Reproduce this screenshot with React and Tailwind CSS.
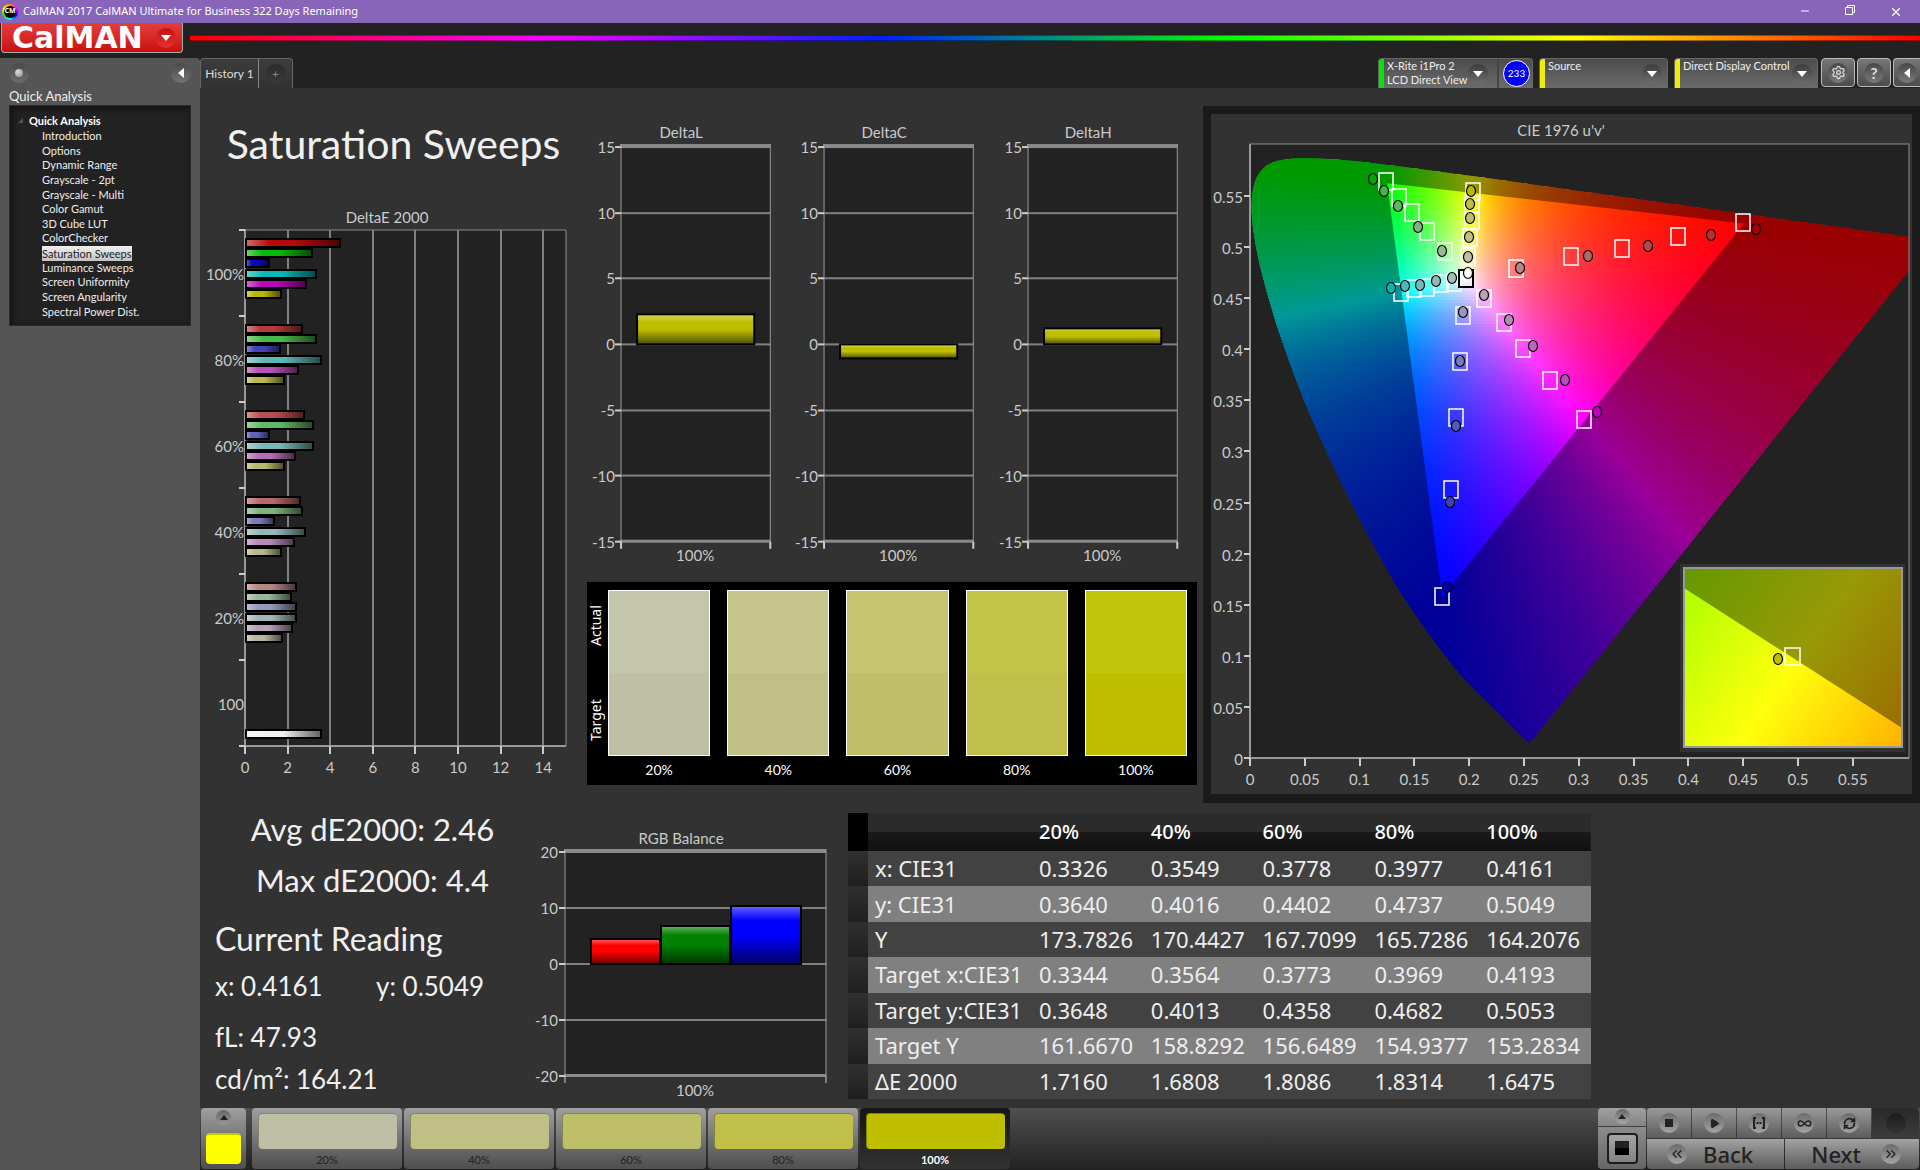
import { Minus, Copy, X, Settings, Infinity as Loop, RefreshCw, ChevronsLeft, ChevronsRight, Play } from 'lucide-react';

const WORKFLOW = [
  'Introduction',
  'Options',
  'Dynamic Range',
  'Grayscale - 2pt',
  'Grayscale - Multi',
  'Color Gamut',
  '3D Cube LUT',
  'ColorChecker',
  'Saturation Sweeps',
  'Luminance Sweeps',
  'Screen Uniformity',
  'Screen Angularity',
  'Spectral Power Dist.',
];

const DELTA_E = [
  { label: '100%', values: [4.4, 3.1, 1.1, 3.3, 2.8, 1.65], colors: ['#b80a0a', '#0ab80a', '#0a0ab8', '#0ab8b8', '#b80ab8', '#b8b80a'] },
  { label: '80%', values: [2.65, 3.3, 1.58, 3.5, 2.45, 1.8], colors: ['#b93a3a', '#48b848', '#4444b8', '#5cb8b8', '#b850b8', '#b8b850'] },
  { label: '60%', values: [2.7, 3.16, 1.06, 3.16, 2.32, 1.8], colors: ['#b94f4f', '#64b864', '#6060b8', '#78b8b8', '#b86cb8', '#b8b86e'] },
  { label: '40%', values: [2.55, 2.65, 1.33, 2.78, 2.24, 1.66], colors: ['#b86868', '#7cb47c', '#7b7bb8', '#92b8b8', '#b888b8', '#b8b888'] },
  { label: '20%', values: [2.36, 2.13, 2.36, 2.36, 2.18, 1.71], colors: ['#b88585', '#98b898', '#9898b8', '#a2b8b8', '#b8a0b8', '#b8b8a0'] },
];

const SWATCHES = [
  { label: '20%', actual: '#c3c6aa', target: '#bfbfa5' },
  { label: '40%', actual: '#c5c58c', target: '#c0bf86' },
  { label: '60%', actual: '#c5c56e', target: '#bfbf6a' },
  { label: '80%', actual: '#c3c549', target: '#bfbf4a' },
  { label: '100%', actual: '#c3c40e', target: '#bfbf00' },
];

const READINGS = [
  ['x: CIE31', '0.3326', '0.3549', '0.3778', '0.3977', '0.4161'],
  ['y: CIE31', '0.3640', '0.4016', '0.4402', '0.4737', '0.5049'],
  ['Y', '173.7826', '170.4427', '167.7099', '165.7286', '164.2076'],
  ['Target x:CIE31', '0.3344', '0.3564', '0.3773', '0.3969', '0.4193'],
  ['Target y:CIE31', '0.3648', '0.4013', '0.4358', '0.4682', '0.5053'],
  ['Target Y', '161.6670', '158.8292', '156.6489', '154.9377', '153.2834'],
  ['ΔE 2000', '1.7160', '1.6808', '1.8086', '1.8314', '1.6475'],
];

// CIE 1931 xy of the spectral locus
const LOCUS_XY = [
  [0.1741, 0.005], [0.1714, 0.0051], [0.1644, 0.0109], [0.1566, 0.0177], [0.144, 0.0297], [0.1241, 0.0578],
  [0.1096, 0.0868], [0.0913, 0.1327], [0.0687, 0.2007], [0.0454, 0.295], [0.0235, 0.4127], [0.0082, 0.5384],
  [0.0039, 0.6548], [0.0139, 0.7502], [0.0389, 0.812], [0.0743, 0.8338], [0.1142, 0.8262], [0.1547, 0.8059],
  [0.2296, 0.7543], [0.3016, 0.6923], [0.3731, 0.6245], [0.4441, 0.5547], [0.5125, 0.4866], [0.5752, 0.4242],
  [0.627, 0.3725], [0.6658, 0.334], [0.6915, 0.3083], [0.719, 0.2809], [0.7347, 0.2653],
];

const PLOT_W = 659;
const PLOT_H = 614;
const U_SCALE = 1096;
const V_SCALE = 1022;

const toPlot = (u, v) => [u * U_SCALE, PLOT_H - v * V_SCALE];

const locus = LOCUS_XY.map(([x, y]) => {
  const d = -2 * x + 12 * y + 3;
  return toPlot((4 * x) / d, (9 * y) / d);
});

const gamut = [toPlot(0.4507, 0.5229), toPlot(0.125, 0.5625), toPlot(0.1754, 0.1579)];

// Catmull-Rom through the locus samples, closed by the purple line
function smoothPath(pts) {
  let d = `M${pts[0][0]} ${pts[0][1]}`;
  for (let i = 0; i < pts.length - 1; i++) {
    const p0 = pts[i - 1] || pts[i];
    const p1 = pts[i];
    const p2 = pts[i + 1];
    const p3 = pts[i + 2] || p2;
    d += `C${p1[0] + (p2[0] - p0[0]) / 6} ${p1[1] + (p2[1] - p0[1]) / 6} ${p2[0] - (p3[0] - p1[0]) / 6} ${p2[1] - (p3[1] - p1[1]) / 6} ${p2[0]} ${p2[1]}`;
  }
  return d + 'Z';
}

// linear RGB, scaled so that the strongest channel is full
function chromaColor(px, py) {
  const u = px / U_SCALE;
  const v = Math.max((PLOT_H - py) / V_SCALE, 0.002);
  const d = 6 * u - 16 * v + 12;
  const x = (9 * u) / d;
  const y = (4 * v) / d;
  const X = x / y;
  const Z = (1 - x - y) / y;
  const rgb = [
    3.2406 * X - 1.5372 - 0.4986 * Z,
    -0.9689 * X + 1.8758 + 0.0415 * Z,
    0.0557 * X - 0.204 + 1.057 * Z,
  ].map((c) => Math.max(c, 0));
  const max = Math.max(...rgb);
  return `rgb(${rgb.map((c) => Math.round((255 * c) / max)).join(',')})`;
}

const ROW = 3;
const colorRows = [];
for (let y = 0; y < PLOT_H; y += ROW) {
  const xs = [];
  locus.forEach((a, i) => {
    const b = locus[(i + 1) % locus.length];
    for (const yy of [y - 4, y + 1, y + 7]) {
      if (a[1] > yy !== b[1] > yy) {
        xs.push(a[0] + ((yy - a[1]) / (b[1] - a[1])) * (b[0] - a[0]));
      }
    }
  });
  if (!xs.length) continue;
  const x1 = Math.max(Math.min(...xs) - 30, 0);
  const x2 = Math.min(Math.max(...xs) + 30, PLOT_W);
  const n = Math.ceil((x2 - x1) / 8);
  const stops = [];
  for (let i = 0; i <= n; i++) {
    stops.push(chromaColor(x1 + ((x2 - x1) * i) / n, y + ROW / 2));
  }
  colorRows.push({ y, x1, x2, stops });
}

const TARGETS = [
  [493, 78], [428, 92], [372, 104], [321, 112], [266, 124],
  [136, 37], [149, 53], [162, 68], [177, 87], [195, 107],
  [223, 47], [222, 60], [222, 76], [220, 93], [218, 112],
  [151, 148], [164, 144], [177, 143], [191, 139], [204, 138],
  [234, 154], [254, 178], [273, 204], [300, 236], [334, 275],
  [213, 171], [210, 217], [206, 273], [201, 345], [192, 452],
];

const ACTUALS = [
  [506, 85, '#a80000'], [461, 91, '#b83030'], [398, 102, '#b84848'], [338, 112, '#b86464'], [270, 124, '#b88585'],
  [123, 35, '#00a800'], [134, 47, '#40b840'], [148, 62, '#60b860'], [168, 83, '#7cb47c'], [192, 107, '#98b898'],
  [221, 47, '#b8b800'], [220, 60, '#bfbf48'], [220, 74, '#bfbf6a'], [219, 93, '#bfbf86'], [218, 113, '#bfbfa5'],
  [141, 144, '#00b8b8'], [155, 142, '#50b8b8'], [170, 141, '#78b8b8'], [186, 137, '#92b8b8'], [202, 134, '#a6bcbc'],
  [234, 151, '#b8a0b8'], [259, 176, '#b888b8'], [283, 202, '#b86cb8'], [315, 236, '#b850b8'], [347, 268, '#c000c0'],
  [213, 168, '#9898c0'], [210, 217, '#7b7bb8'], [206, 282, '#5858b8'], [200, 358, '#4040b8'], [197, 443, '#0000b0'],
  [218, 129, '#ffffff'],
];

const chartText = "fill-[#cacaca] font-['Lato',sans-serif] text-[15px]";

function GlossDefs({ id, vertical }) {
  return (
    <linearGradient id={id} x1="0" y1="0" x2={vertical ? '0' : '1'} y2={vertical ? '1' : '0'}>
      <stop offset="0" stopColor="#fff" stopOpacity="0.4" />
      <stop offset="0.25" stopColor="#fff" stopOpacity="0" />
      <stop offset="0.5" stopColor="#000" stopOpacity="0" />
      <stop offset="1" stopColor="#000" stopOpacity="0.6" />
    </linearGradient>
  );
}

function GlossBar({ x, y, w, h, fill, gloss }) {
  return (
    <g>
      <rect x={x} y={y} width={w} height={h} fill={fill} />
      <rect x={x} y={y} width={w} height={h} fill={`url(#${gloss})`} stroke="#000" strokeWidth="2" />
    </g>
  );
}

function DeltaEChart() {
  const x0 = 45;
  const top = 30;
  const group = 86;
  const unit = 21.3;
  return (
    <svg viewBox="0 0 387 603" className="block w-full" role="img" aria-label="DeltaE 2000 by saturation level">
      <defs>
        <GlossDefs id="gloss-h" />
      </defs>
      <text x="187" y="23" textAnchor="middle" className={chartText}>DeltaE 2000</text>
      <rect x={x0} y={top} width="321" height="516" fill="#222" />
      {[2, 4, 6, 8, 10, 12, 14].map((v) => (
        <rect key={v} x={Math.round(x0 + v * unit) - 1} y={top} width="2" height="516" fill="#808080" />
      ))}
      <path d="M45 30H366V546" fill="none" stroke="#8c8c8c" strokeWidth="1" />
      <path d="M45 29V546H366" fill="none" stroke="#999" strokeWidth="2" />
      {[0, 1, 2, 3, 4, 5, 6].map((i) => (
        <rect key={i} x="39" y={top + i * group - 1} width="6" height="2" fill="#ccc" />
      ))}
      {[0, 2, 4, 6, 8, 10, 12, 14].map((v) => (
        <g key={v}>
          <rect x={Math.round(x0 + v * unit) - 1} y="546" width="2" height="8" fill="#ccc" />
          <text x={x0 + v * unit} y="573" textAnchor="middle" className={chartText}>{v}</text>
        </g>
      ))}
      {DELTA_E.map((g, i) => (
        <g key={g.label}>
          <text x="44" y={top + i * group + 50} textAnchor="end" className={chartText}>{g.label}</text>
          {g.values.map((v, j) => (
            <GlossBar
              key={j}
              x={x0 + 1}
              y={Math.round(39 + i * group + j * 10.2)}
              w={Math.round(v * unit)}
              h={8}
              fill={g.colors[j]}
              gloss="gloss-h"
            />
          ))}
        </g>
      ))}
      <text x="44" y="510" textAnchor="end" className={chartText}>100</text>
      <GlossBar x={x0 + 1} y={530} w={75} h={8} fill="#f0f0f0" gloss="gloss-h" />
    </svg>
  );
}

function DeltaChart({ title, id, value }) {
  const unit = 13.13;
  const zero = 234;
  return (
    <svg viewBox="0 0 203 471" className="block min-w-0 flex-1" role="img" aria-label={title}>
      <defs>
        <GlossDefs id={id} vertical />
      </defs>
      <text x="94" y="28" textAnchor="middle" className={chartText}>{title}</text>
      <rect x="34" y="34" width="149" height="397" fill="#222" />
      {[10, 5, 0, -5, -10].map((v) => (
        <rect key={v} x="34" y={Math.round(zero - v * unit) - 1} width="149" height="2" fill="#808080" />
      ))}
      <rect x="33" y="34" width="150" height="4" fill="#8a8a8a" />
      <rect x="33" y="429" width="150" height="3" fill="#8a8a8a" />
      <path d="M34 34V431M183 34V431" stroke="#999" strokeWidth="1" />
      <path d="M34 431V438M183 431V438" stroke="#ccc" strokeWidth="2" />
      {[15, 10, 5, 0, -5, -10, -15].map((v) => (
        <g key={v}>
          <rect x="28" y={Math.round(zero - v * unit) - 1} width="6" height="2" fill="#ccc" />
          <text x="28" y={Math.round(zero - v * unit) + 6} textAnchor="end" className={chartText}>{v}</text>
        </g>
      ))}
      <GlossBar
        x={50}
        y={value > 0 ? Math.round(zero - value * unit) : zero}
        w={117}
        h={Math.round(Math.abs(value) * unit)}
        fill="#bfbf00"
        gloss={id}
      />
      <text x="108" y="450" textAnchor="middle" className={chartText}>100%</text>
    </svg>
  );
}

function RgbBalanceChart() {
  return (
    <svg viewBox="0 0 318 305" className="block w-full" role="img" aria-label="RGB Balance">
      <defs>
        <GlossDefs id="gloss-rgb" vertical />
      </defs>
      <text x="151" y="41" textAnchor="middle" className={chartText}>RGB Balance</text>
      <rect x="35" y="46" width="261" height="228" fill="#222" />
      {[105, 161, 217].map((y) => (
        <rect key={y} x="35" y={y - 1} width="261" height="2" fill="#808080" />
      ))}
      <rect x="34" y="46" width="262" height="4" fill="#8a8a8a" />
      <rect x="34" y="271" width="262" height="3" fill="#8a8a8a" />
      <path d="M35 46V273M296 46V273" stroke="#999" strokeWidth="1" />
      <path d="M35 273V280M296 273V280" stroke="#ccc" strokeWidth="1" />
      {[20, 10, 0, -10, -20].map((v, i) => (
        <g key={v}>
          <rect x="29" y={48 + i * 56} width="6" height="2" fill="#ccc" />
          <text x="28" y={55 + i * 56} textAnchor="end" className={chartText}>{v}</text>
        </g>
      ))}
      <GlossBar x={61} y={136} w={69} h={25} fill="#ff0000" gloss="gloss-rgb" />
      <GlossBar x={131} y={123} w={69} h={38} fill="#008000" gloss="gloss-rgb" />
      <GlossBar x={201} y={103} w={70} h={58} fill="#0000ff" gloss="gloss-rgb" />
      <text x="165" y="293" textAnchor="middle" className={chartText}>100%</text>
    </svg>
  );
}

function CieChart() {
  const locusPath = smoothPath(locus);
  const gamutPath = `M${gamut.map((p) => p.join(' ')).join('L')}Z`;
  return (
    <svg viewBox="0 0 701 680" className="block w-full bg-[#323232]" role="img" aria-label="CIE 1976 chromaticity diagram">
      <defs>
        <clipPath id="plot-clip">
          <rect width={PLOT_W} height={PLOT_H} />
        </clipPath>
        <clipPath id="locus-clip">
          <path d={locusPath} />
        </clipPath>
        {colorRows.map((r) => (
          <linearGradient key={r.y} id={`row-${r.y}`} gradientUnits="userSpaceOnUse" x1={r.x1} x2={r.x2} y1="0" y2="0">
            {r.stops.map((c, i) => (
              <stop key={i} offset={i / (r.stops.length - 1)} stopColor={c} />
            ))}
          </linearGradient>
        ))}
        <linearGradient id="inset-bright" gradientUnits="userSpaceOnUse" x1="-3" y1="6" x2="235" y2="172">
          <stop offset="0" stopColor="#a7ff00" />
          <stop offset="0.5" stopColor="#ffff0c" />
          <stop offset="1" stopColor="#ffac00" />
        </linearGradient>
      </defs>
      <text x="350" y="22" textAnchor="middle" className={chartText}>CIE 1976 u'v'</text>
      <g transform="translate(39 30)">
        <rect width={PLOT_W} height={PLOT_H} fill="#222" />
        <g clipPath="url(#plot-clip)">
          <g clipPath="url(#locus-clip)">
            {colorRows.map((r) => (
              <rect key={r.y} x={r.x1} y={r.y} width={r.x2 - r.x1} height={ROW + 1} fill={`url(#row-${r.y})`} />
            ))}
            <path d={`M0 0H${PLOT_W}V${PLOT_H}H0Z${gamutPath}`} fill="#000" fillOpacity="0.4" fillRule="evenodd" />
          </g>
        </g>
        <rect width={PLOT_W} height={PLOT_H} fill="none" stroke="#8c8c8c" strokeWidth="1" />
        <path d={`M0 0V${PLOT_H}H${PLOT_W}`} fill="none" stroke="#999" strokeWidth="2" />
        {[0, 0.05, 0.1, 0.15, 0.2, 0.25, 0.3, 0.35, 0.4, 0.45, 0.5, 0.55].map((v) => (
          <g key={v}>
            <rect x={Math.round(v * U_SCALE) - 1} y={PLOT_H} width="2" height="8" fill="#ccc" />
            <rect x="-6" y={Math.round(PLOT_H - v * V_SCALE) - 1} width="6" height="2" fill="#ccc" />
            <text x={v * U_SCALE} y="641" textAnchor="middle" className={chartText}>{v}</text>
            <text x="-7" y={PLOT_H - v * V_SCALE + 7} textAnchor="end" className={chartText}>{v}</text>
          </g>
        ))}
        {TARGETS.map(([x, y], i) => (
          <rect key={i} x={x - 7} y={y - 8} width="14" height="17" fill="none" stroke="#fff" strokeWidth="1.500" />
        ))}
        <rect x="209" y="126" width="14" height="17" fill="none" stroke="#000" strokeWidth="2" />
        {ACTUALS.map(([x, y, fill], i) => (
          <ellipse key={i} cx={x} cy={y} rx="4.500" ry="5.500" fill={fill} stroke="#000" strokeWidth="1.200" />
        ))}
      </g>
      {/* close-up of the selected saturation */}
      <g transform="translate(473 454)">
        <rect x="-4" y="-4" width="225" height="188" fill="#323232" />
        <rect width="218" height="179" fill="url(#inset-bright)" />
        <path d="M0 0H218V160L0 20Z" fill="#000" fillOpacity="0.4" />
        <rect width="218" height="179" fill="none" stroke="#999" strokeWidth="2" />
        <rect x="101" y="80" width="15" height="17" fill="none" stroke="#fff" strokeWidth="1.500" />
        <ellipse cx="94" cy="91" rx="4.500" ry="5.500" fill="#bfbf00" stroke="#000" strokeWidth="1.200" />
      </g>
    </svg>
  );
}

function SwatchPanel() {
  return (
    <div className="flex h-[203px] bg-black pt-2 pr-[10px] font-['Lato',sans-serif] text-[14px] leading-4 text-white">
      <div className="flex h-[166px] w-[21px] rotate-180 items-center justify-between pt-[15px] pb-[15px] pl-[3px] font-['Noto_Sans',sans-serif] [writing-mode:vertical-rl]">
        <span>Target</span>
        <span>Actual</span>
      </div>
      <div className="flex flex-1 gap-[17px]">
        {SWATCHES.map((s) => (
          <div key={s.label} className="flex flex-1 flex-col items-center">
            <div className="flex h-[166px] w-full flex-col border border-white">
              <div className="flex-1" style={{ backgroundColor: s.actual }} />
              <div className="flex-1" style={{ backgroundColor: s.target }} />
            </div>
            <span className="mt-[6px]">{s.label}</span>
          </div>
        ))}
      </div>
    </div>
  );
}

function ReadingsTable() {
  return (
    <table className="mt-[10px] mb-[9px] w-full table-fixed border-collapse text-left font-['Noto_Sans',sans-serif] text-[22px] leading-[35px] text-[#eee]">
      <colgroup>
        <col className="w-[20px]" />
        <col className="w-[164px]" />
        <col /><col /><col /><col /><col />
      </colgroup>
      <thead>
        <tr className="h-[38px] bg-linear-to-b from-[#2b2b2b] from-50% via-[#1a1a1a] via-50% to-[#101010] text-[20px] leading-[38px]">
          <th scope="col" className="bg-black" />
          <th scope="col" />
          {SWATCHES.map((s) => (
            <th key={s.label} scope="col" className="p-0 pl-[7px] font-medium text-white">{s.label}</th>
          ))}
        </tr>
      </thead>
      <tbody>
        {READINGS.map(([name, ...cells], i) => (
          <tr key={name} className={i % 2 ? 'bg-[#808080]' : 'bg-[#424242]'}>
            <td className="bg-linear-to-b from-[#303030] to-[#1f1f1f] p-0" />
            <th scope="row" className="p-0 pl-[7px] font-normal whitespace-nowrap">{name}</th>
            {cells.map((c, j) => (
              <td key={j} className="p-0 pl-[7px]">{c}</td>
            ))}
          </tr>
        ))}
      </tbody>
    </table>
  );
}

function Caret() {
  return (
    <span className="flex size-5 shrink-0 items-center justify-center rounded-full bg-linear-to-b from-[#3c3c3c] to-[#6e6e6e]">
      <svg viewBox="0 0 10 6" className="h-[6px] w-[10px] fill-white"><path d="M0 0H10L5 6Z" /></svg>
    </span>
  );
}

function DeviceButton({ lines, stripe, children, className }) {
  return (
    <button type="button" className={`flex h-[30px] overflow-hidden rounded-t border border-b-0 border-[#666] bg-linear-to-b from-[#4c4c4c] to-[#6b6b6b] text-left ${className}`}>
      <span className={`h-full w-[5px] shrink-0 ${stripe}`} />
      <span className="flex-1 pl-[3px] text-[11px] leading-[14px] whitespace-nowrap text-[#eee]">
        {lines.map((l) => (
          <span key={l} className="block">{l}</span>
        ))}
      </span>
      <span className={`flex h-full items-center ${children ? 'pr-[9px]' : 'pr-[5px]'}`}><Caret /></span>
      {children}
    </button>
  );
}

function IconButton({ label, className, children }) {
  return (
    <button type="button" aria-label={label} className={`flex h-[29px] items-center justify-center rounded border border-[#bbb] bg-linear-to-b from-[#777] to-[#4c4c4c] ${className}`}>
      <span className="flex size-[20px] items-center justify-center rounded-full bg-linear-to-b from-[#484848] to-[#7a7a7a] text-[#ddd]">{children}</span>
    </button>
  );
}

function Knob({ children }) {
  return (
    <span className="flex size-5 items-center justify-center rounded-full bg-linear-to-b from-[#6c6c6c] to-[#a4a4a4] text-[#222]">{children}</span>
  );
}

function TransportButton({ label, className = '', children }) {
  return (
    <button type="button" aria-label={label} className={`flex h-[30px] w-11 items-center justify-center bg-linear-to-b from-[#9a9a9a] to-[#5c5c5c] ${className}`}>
      <Knob>{children}</Knob>
    </button>
  );
}

function Transport() {
  return (
    <div className="flex gap-px pr-px">
      <div className="flex w-12 flex-col gap-px">
        <button type="button" aria-label="Expand" className="flex h-[18px] justify-center rounded-t bg-linear-to-b from-[#a0a0a0] to-[#858585] pt-px">
          <span className="flex size-[15px] items-center justify-center rounded-full bg-linear-to-b from-[#666] to-[#aaa]">
            <svg viewBox="0 0 8 5" className="h-[5px] w-2 fill-[#222]"><path d="M0 5H8L4 0Z" /></svg>
          </span>
        </button>
        <button type="button" aria-label="Stop pattern" className="flex h-[42px] items-center justify-center rounded-b bg-linear-to-b from-[#8c8c8c] to-[#666]">
          <span className="flex size-[31px] items-center justify-center rounded border-2 border-[#1c1c1c] bg-linear-to-b from-[#a5a5a5] to-[#828282]">
            <span className="size-[14px] bg-linear-to-b from-[#222] from-50% to-black to-50%" />
          </span>
        </button>
      </div>
      <div className="flex flex-col gap-px">
        <div className="flex gap-px">
          <TransportButton label="Stop" className="rounded-tl"><span className="size-2 bg-[#222]" /></TransportButton>
          <TransportButton label="Play"><Play className="size-[11px] fill-[#222]" strokeWidth={2} /></TransportButton>
          <TransportButton label="Read series">
            <svg viewBox="0 0 14 12" className="h-3 w-[14px]" fill="none" stroke="#222" strokeWidth="2">
              <path d="M4 1H2V11H4M10 1H12V11H10" />
              <path d="M4.500 6H6.500M7.500 6H9.500" />
            </svg>
          </TransportButton>
          <TransportButton label="Continuous"><Loop className="size-[15px]" strokeWidth={2.500} /></TransportButton>
          <TransportButton label="Refresh"><RefreshCw className="size-[13px]" strokeWidth={3.500} /></TransportButton>
          <button type="button" aria-label="Record" className="flex h-[30px] w-[47px] items-center justify-center rounded-tr bg-linear-to-b from-[#2a2a2a] to-[#3c3c3c]">
            <span className="size-5 rounded-full bg-linear-to-b from-[#1c1c1c] to-[#333]" />
          </button>
        </div>
        <div className="flex gap-px font-['Noto_Sans',sans-serif] text-[22px] leading-[30px] font-medium text-[#222]">
          <button type="button" className="flex h-[30px] flex-1 items-center gap-4 rounded-bl bg-linear-to-b from-[#a3a3a3] to-[#5c5c5c] pl-5">
            <Knob><ChevronsLeft className="size-4" strokeWidth={2} /></Knob>
            Back
          </button>
          <button type="button" className="flex h-[30px] flex-1 items-center justify-end gap-5 rounded-br bg-linear-to-b from-[#a3a3a3] to-[#5c5c5c] pr-[18px]">
            Next
            <Knob><ChevronsRight className="size-4" strokeWidth={2} /></Knob>
          </button>
        </div>
      </div>
    </div>
  );
}

function PatternBar() {
  return (
    <div className="flex h-[62px] justify-between bg-linear-to-b from-[#505050] to-[#222] font-['Lato',sans-serif]">
      <div className="flex">
        <button type="button" aria-label="Pattern options" className="mr-[6px] ml-px flex h-[61px] w-[45px] flex-col items-center gap-2 rounded bg-linear-to-b from-[#a0a0a0] to-[#4e4e4e] pt-[2px]">
          <span className="flex size-[15px] items-center justify-center rounded-full bg-linear-to-b from-[#666] to-[#999]">
            <svg viewBox="0 0 8 5" className="h-[5px] w-2 fill-[#222]"><path d="M0 5H8L4 0Z" /></svg>
          </span>
          <span className="h-[31px] w-[35px] rounded-sm border-t-2 border-[#c8c800] bg-[#ffff00]" />
        </button>
        <div className="flex gap-[2px]">
          {SWATCHES.map((s) => (
            <button
              key={s.label}
              type="button"
              className={`flex h-[61px] w-[150px] flex-col items-center rounded bg-linear-to-b pt-[5px] text-[11px] leading-4 ${s.label === '100%' ? 'from-[#161616] to-[#333] font-bold text-white' : 'from-[#a0a0a0] to-[#4e4e4e] text-[#222]'}`}
            >
              <span className="mb-[3px] h-9 w-[139px] rounded border-t border-l border-black/30" style={{ backgroundColor: s.target }} />
              {s.label}
            </button>
          ))}
        </div>
      </div>
      <Transport />
    </div>
  );
}

function Sidebar() {
  return (
    <aside className="w-[200px] shrink-0 rounded-tr bg-[#555] font-['Lato',sans-serif] text-[#eee]">
      <div className="flex h-[29px] items-center justify-between px-[9px]">
        <button type="button" aria-label="Pin" className="flex size-5 items-center justify-center rounded-full bg-linear-to-b from-[#4a4a4a] to-[#6e6e6e]">
          <span className="size-2 rounded-full bg-[radial-gradient(circle_at_35%_35%,#ddd,#888)]" />
        </button>
        <button type="button" aria-label="Collapse" className="flex size-5 items-center justify-center rounded-full bg-linear-to-b from-[#4a4a4a] to-[#747474]">
          <svg viewBox="0 0 6 10" className="h-[10px] w-[6px] fill-white"><path d="M6 0V10L0 5Z" /></svg>
        </button>
      </div>
      <h2 className="h-[18px] pl-[9px] text-[13px] leading-[18px]">Quick Analysis</h2>
      <nav className="mr-[9px] ml-[9px] h-[221px] border border-[#2a2a2a] bg-[#222] pt-[6px] text-[11px] shadow-[inset_2px_2px_6px_#111]">
        <div className="flex items-center gap-[6px] pl-2 leading-[17px] font-bold text-white">
          <svg viewBox="0 0 5 5" className="size-[5px] fill-[#555]"><path d="M5 0V5H0Z" /></svg>
          Quick Analysis
        </div>
        <ul className="flex h-[190px] flex-col pl-8">
          {WORKFLOW.map((item) => (
            <li key={item} className="flex flex-1 items-center">
              <a
                href="#"
                className={item === 'Saturation Sweeps' ? 'bg-linear-to-b from-[#f0f0f0] to-[#c4c4c4] leading-[15px] text-[#222]' : 'leading-[14px]'}
              >
                {item}
              </a>
            </li>
          ))}
        </ul>
      </nav>
    </aside>
  );
}

function TitleBar() {
  return (
    <header className="flex h-[23px] items-center justify-between bg-[#8865b9] font-['Noto_Sans',sans-serif] text-[11px] text-white">
      <div className="flex items-center gap-[5px] pl-[2px]">
        <span className="flex size-4 items-center justify-center rounded-full bg-[conic-gradient(#f80,#f0f,#00f,#0ff,#0f0,#ff0,#f80)]">
          <span className="flex size-3 items-center justify-center rounded-full bg-black text-[7px] font-bold">CM</span>
        </span>
        <span>CalMAN 2017 CalMAN Ultimate for Business 322 Days Remaining</span>
      </div>
      <div className="flex">
        <button type="button" aria-label="Minimize" className="flex w-[45px] justify-center"><Minus className="size-3" strokeWidth={2} /></button>
        <button type="button" aria-label="Restore" className="flex w-[45px] justify-center">
          <svg viewBox="0 0 10 10" className="size-[10px]" fill="none" stroke="#fff" strokeWidth="1">
            <path d="M0.500 2.500H7.500V9.500H0.500ZM2.500 2.500V0.500H9.500V7.500H7.500" />
          </svg>
        </button>
        <button type="button" aria-label="Close" className="flex w-[48px] justify-center"><X className="size-[14px]" strokeWidth={2} /></button>
      </div>
    </header>
  );
}

export default function App() {
  return (
    <div className="flex min-h-screen flex-col bg-[#222]">
      <TitleBar />

      <div className="flex h-[35px] items-start">
        <button type="button" className="ml-px flex h-[30px] w-[182px] items-center justify-between rounded-b border border-t-0 border-[#aaa] bg-linear-to-b from-[#e43c3c] to-[#c80c0c] pr-[6px] pl-[10px] font-['DejaVu_Sans',sans-serif] text-[30px] leading-[28px] font-bold text-white">
          CalMAN
          <span className="flex size-5 items-center justify-center rounded-full bg-linear-to-b from-[#c01010] to-[#e83030]">
            <svg viewBox="0 0 10 6" className="h-[6px] w-[10px] fill-white"><path d="M0 0H10L5 6Z" /></svg>
          </span>
        </button>
        <div className="mt-3 ml-[7px] h-[6px] flex-1 border-y border-black/40 bg-[linear-gradient(to_right,#f00,#f0f_20%,#0020ff_40%,#0f0_60%,#ff0_80%,#f00)]" />
      </div>

      <div className="flex flex-1">
        <Sidebar />
        <main className="flex min-w-0 flex-1 flex-col">
          <div className="flex h-[30px] items-end justify-between font-['Lato',sans-serif]">
            <div className="flex h-[30px] rounded-t border border-b-0 border-[#666] bg-linear-to-b from-[#3c3c3c] to-[#323232] text-[#ddd]">
              <button type="button" className="w-[58px] border-r border-[#888] text-[12px] whitespace-nowrap">History 1</button>
              <button type="button" aria-label="Add history" className="flex w-[33px] items-center justify-center">
                <span className="flex size-5 items-center justify-center rounded-full bg-linear-to-b from-[#2a2a2a] to-[#3a3a3a] text-[12px] text-[#888]">+</span>
              </button>
            </div>
            <div className="flex h-[30px]">
              <DeviceButton lines={['X-Rite i1Pro 2', 'LCD Direct View']} stripe="bg-[#00e600]" className="mr-[6px] w-[155px]">
                <span className="flex h-full w-[35px] items-center justify-center border-l-2 border-[#444] pl-[2px]">
                  <span className="flex size-[27px] items-center justify-center rounded-full border border-white bg-[#0000ff] text-[10px] text-white">233</span>
                </span>
              </DeviceButton>
              <DeviceButton lines={['Source']} stripe="bg-[#eeee00]" className="mr-[6px] w-[129px]" />
              <DeviceButton lines={['Direct Display Control']} stripe="bg-[#eeee00]" className="mr-[3px] w-[144px]" />
              <IconButton label="Settings" className="mr-[2px] w-[34px]"><Settings className="size-[15px]" strokeWidth={2} /></IconButton>
              <IconButton label="Help" className="mr-[2px] w-[34px]"><span className="text-[16px] leading-5 font-bold">?</span></IconButton>
              <IconButton label="Collapse panel" className="w-[27px] rounded-r-none border-r-0">
                <svg viewBox="0 0 6 10" className="h-[10px] w-[6px] fill-white"><path d="M6 0V10L0 5Z" /></svg>
              </IconButton>
            </div>
          </div>

          <div className="flex-1 bg-[#323232]">
            <div className="grid grid-cols-[387fr_610fr_723fr]">
              <section className="pt-[31px]">
                <h1 className="mb-[31px] text-center font-['Lato',sans-serif] text-[41px] leading-[50px] text-[#f0f0f0]">Saturation Sweeps</h1>
                <DeltaEChart />
              </section>
              <section className="pt-[22px]">
                <div className="flex">
                  <DeltaChart title="DeltaL" id="gloss-l" value={2.3} />
                  <DeltaChart title="DeltaC" id="gloss-c" value={-1.05} />
                  <DeltaChart title="DeltaH" id="gloss-hue" value={1.2} />
                </div>
                <SwatchPanel />
              </section>
              <section className="pt-[18px] pl-[6px]">
                <div className="border-8 border-b-[9px] border-[#1a1a1a]">
                  <CieChart />
                </div>
              </section>
            </div>

            <div className="grid grid-cols-[330fr_318fr_743fr_329fr]">
              <section className="pt-[6px] pl-[15px] font-['Lato',sans-serif] text-[#f0f0f0]">
                <div className="text-center text-[31px] leading-10 whitespace-nowrap">
                  <p>Avg dE2000: 2.46</p>
                  <p className="mt-[11px]">Max dE2000: 4.4</p>
                </div>
                <h2 className="mt-[19px] text-[32px] leading-10">Current Reading</h2>
                <div className="text-[26px] leading-9">
                  <p className="mt-[9px] flex">
                    <span className="w-[161px]">x: 0.4161</span>
                    <span>y: 0.5049</span>
                  </p>
                  <p className="mt-[15px]">fL: 47.93</p>
                  <p className="mt-[6px]">cd/m²: 164.21</p>
                </div>
              </section>
              <RgbBalanceChart />
              <ReadingsTable />
            </div>
          </div>

          <PatternBar />
        </main>
      </div>
    </div>
  );
}
